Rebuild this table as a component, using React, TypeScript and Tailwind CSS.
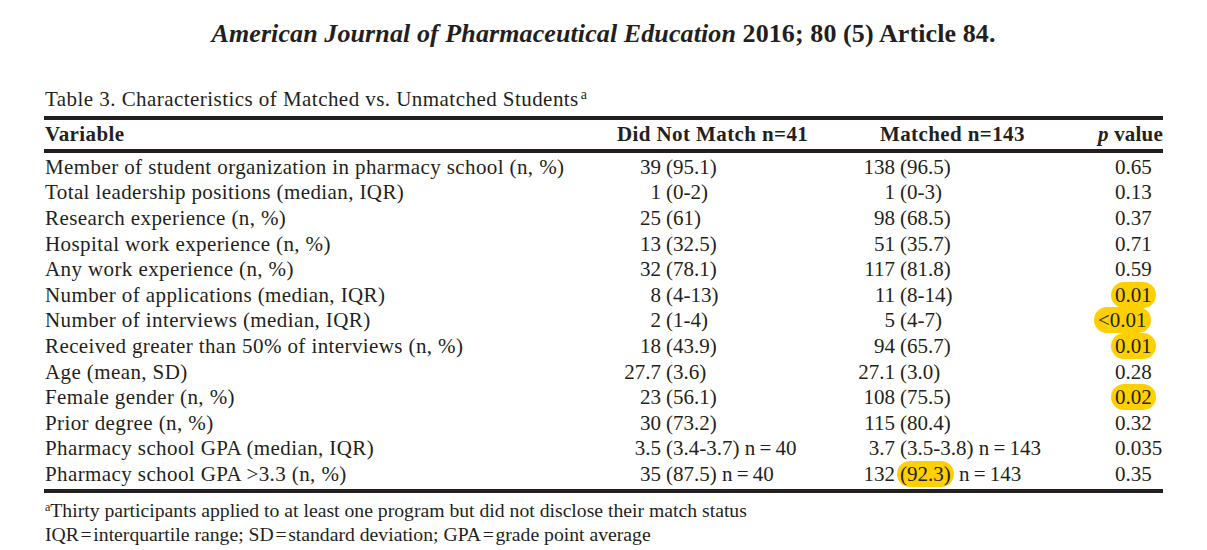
const ink = "text-[#231f20]";

type Row = {
  label: string;
  a: [string, string];
  b: [string, string, boolean?];
  p: string;
  pre?: string;
  hl?: boolean;
};

const rows: Row[] = [
  { label: "Member of student organization in pharmacy school (n, %)", a: ["39", "(95.1)"], b: ["138", "(96.5)"], p: "0.65" },
  { label: "Total leadership positions (median, IQR)", a: ["1", "(0-2)"], b: ["1", "(0-3)"], p: "0.13" },
  { label: "Research experience (n, %)", a: ["25", "(61)"], b: ["98", "(68.5)"], p: "0.37" },
  { label: "Hospital work experience (n, %)", a: ["13", "(32.5)"], b: ["51", "(35.7)"], p: "0.71" },
  { label: "Any work experience (n, %)", a: ["32", "(78.1)"], b: ["117", "(81.8)"], p: "0.59" },
  { label: "Number of applications (median, IQR)", a: ["8", "(4-13)"], b: ["11", "(8-14)"], p: "0.01", hl: true },
  { label: "Number of interviews (median, IQR)", a: ["2", "(1-4)"], b: ["5", "(4-7)"], p: "0.01", pre: "<", hl: true },
  { label: "Received greater than 50% of interviews (n, %)", a: ["18", "(43.9)"], b: ["94", "(65.7)"], p: "0.01", hl: true },
  { label: "Age (mean, SD)", a: ["27.7", "(3.6)"], b: ["27.1", "(3.0)"], p: "0.28" },
  { label: "Female gender (n, %)", a: ["23", "(56.1)"], b: ["108", "(75.5)"], p: "0.02", hl: true },
  { label: "Prior degree (n, %)", a: ["30", "(73.2)"], b: ["115", "(80.4)"], p: "0.32" },
  { label: "Pharmacy school GPA (median, IQR)", a: ["3.5", "(3.4-3.7) n\u2009=\u200940"], b: ["3.7", "(3.5-3.8) n\u2009=\u2009143"], p: "0.035" },
  { label: "Pharmacy school GPA >3.3 (n, %)", a: ["35", "(87.5) n\u2009=\u200940"], b: ["132", "(92.3)", true], p: "0.35" },
];

function PValue({ r }: { r: Row }) {
  if (!r.hl) {
    return (
      <>
        <span className="inline-block w-[22px]" />
        {r.p}
      </>
    );
  }
  return (
    <>
      <span className={r.pre ? "inline-block w-[1px]" : "inline-block w-[18px]"} />
      <span className="rounded-full bg-[#ffd000] px-[4px] py-[1px]">
        {r.pre ?? ""}
        {r.p}
      </span>
    </>
  );
}

export default function App() {
  return (
    <div className={`h-[550px] w-[1207px] bg-white ${ink} font-['Liberation_Serif',serif]`}>
      <div className="pt-[17px] text-center text-[26px] font-bold leading-[33px] tracking-[0.1px]">
        <i>American Journal of Pharmaceutical Education</i> 2016; 80 (5) Article 84.
      </div>

      <div className="ml-[44px] mt-[36px] w-[1119px]">
        <div className="pl-[1px] text-[21px] leading-[26px] tracking-[0.45px]">
          Table 3. Characteristics of Matched vs. Unmatched Students
          <sup className="ml-[2px] text-[14px]">a</sup>
        </div>
        <div className="mt-[4px] h-[4px] bg-[#231f20]" />
        <div className="flex h-[29px] items-center whitespace-nowrap text-[21px] font-bold tracking-[0.4px]">
          <div className="w-[573px] pl-[1px]">Variable</div>
          <div className="w-[263px]">Did Not Match n=41</div>
          <div className="w-[200px]">Matched n=143</div>
          <div className="flex-1 text-right tracking-[0.2px]">
            <i>p</i> value
          </div>
        </div>
        <div className="h-[4px] bg-[#231f20]" />

        <div className="pt-[1px] text-[21px]">
          {rows.map((r) => (
            <div key={r.label} className="flex h-[25.6px] items-center whitespace-nowrap leading-[24px]">
              <div className="w-[567px] pl-[1px] tracking-[0.4px]">{r.label}</div>
              <div className="w-[50px] text-right">{r.a[0]}</div>
              <div className="w-[184px] pl-[5px]">{r.a[1]}</div>
              <div className="w-[50px] text-right">{r.b[0]}</div>
              <div className="w-[198px] pl-[5px]">
                {r.b[2] ? (
                  <>
                    <span className="-ml-[3px] rounded-full bg-[#ffd000] px-[3px] py-[1px]">{r.b[1]}</span> n
                    {"\u2009=\u2009"}143
                  </>
                ) : (
                  r.b[1]
                )}
              </div>
              <div className="flex-1">
                <PValue r={r} />
              </div>
            </div>
          ))}
        </div>

        <div className="mt-[2px] h-[4px] bg-[#231f20]" />
        <div className="mt-[5px] pl-[1px] text-[19.7px] leading-[24px]">
          <sup className="text-[12px]">a</sup>Thirty participants applied to at least one program but did not disclose their match status
        </div>
        <div className="pl-[1px] text-[19.7px] leading-[24px]">
          IQR{"\u200a=\u200a"}interquartile range; SD{"\u200a=\u200a"}standard deviation; GPA{"\u200a=\u200a"}grade point average
        </div>
      </div>
    </div>
  );
}
